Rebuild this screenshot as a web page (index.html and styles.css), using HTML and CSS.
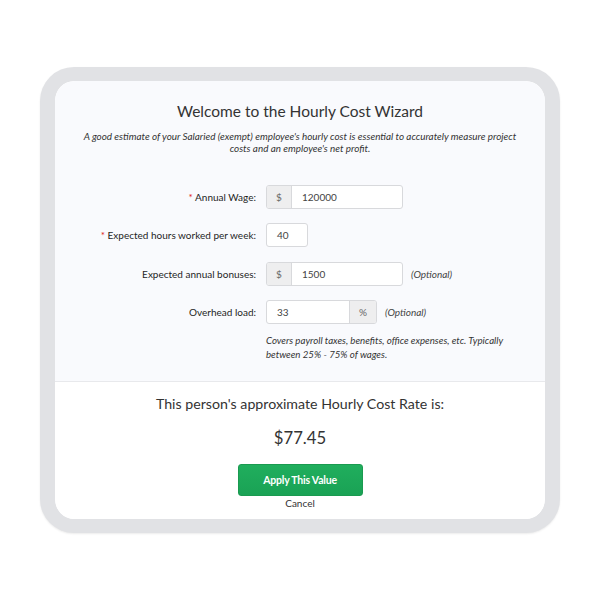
FILE: index.html
```html
<!DOCTYPE html>
<html>
<head>
<meta charset="utf-8">
<link rel="stylesheet" href="styles.css">
</head>
<body>
<div class="frame">
  <div class="card">
    <div class="top">
      <h1 class="title">Welcome to the Hourly Cost Wizard</h1>
      <p class="intro">A good estimate of your Salaried (exempt) employee's hourly cost is essential to accurately measure project costs and an employee's net profit.</p>
      <div class="form">
        <div class="label"><span class="req">*</span> Annual Wage:</div>
        <div class="field">
          <div class="group wide"><span class="addon">$</span><span class="input">120000</span></div>
        </div>
        <div class="label"><span class="req">*</span> Expected hours worked per week:</div>
        <div class="field">
          <div class="group short"><span class="input">40</span></div>
        </div>
        <div class="label">Expected annual bonuses:</div>
        <div class="field">
          <div class="group wide"><span class="addon">$</span><span class="input">1500</span></div>
          <span class="opt">(Optional)</span>
        </div>
        <div class="label">Overhead load:</div>
        <div class="field">
          <div class="group mid"><span class="input">33</span><span class="addon right">%</span></div>
          <span class="opt">(Optional)</span>
        </div>
        <div></div>
        <p class="help">Covers payroll taxes, benefits, office expenses, etc. Typically between 25% - 75% of wages.</p>
      </div>
    </div>
    <div class="bottom">
      <p class="rate-label">This person's approximate Hourly Cost Rate is:</p>
      <p class="rate">$77.45</p>
      <button class="apply">Apply This Value</button>
      <a class="cancel">Cancel</a>
    </div>
  </div>
</div>
</body>
</html>
```
FILE: styles.css
```css
html, body { margin: 0; padding: 0; background: #fff; }
body {
  font-family: Lato, "Open Sans", Arial, sans-serif;
  color: #333;
  width: 600px; height: 600px;
}
.frame {
  position: relative;
  margin: 67px 0 0 40px;
  width: 490px;
  height: 438px;
  border: 14px solid #e1e2e5;
  border-left-width: 15px;
  border-right-width: 15px;
  border-radius: 34px;
  box-shadow: 0 1px 2px rgba(0,0,0,0.08);
  overflow: hidden;
  background: #fff;
}
.card {
  height: 100%;
  display: flex;
  flex-direction: column;
  border-radius: 20px;
  overflow: hidden;
}
.top {
  background: #f9fafd;
  border-bottom: 1px solid #e8e9ec;
  padding: 19px 0 0 0;
  height: 301px;
  box-sizing: border-box;
}
.title {
  margin: 0;
  text-align: center;
  font-weight: 400;
  font-size: 15.5px;
  line-height: 22px;
  color: #333;
}
.intro {
  margin: 8px 20px 0 20px;
  text-align: center;
  font-style: italic;
  font-size: 9.9px;
  line-height: 12px;
  color: #333;
}
.form {
  margin-top: 31px;
  display: grid;
  grid-template-columns: 201px 1fr;
  column-gap: 10px;
  row-gap: 14.3px;
  align-items: center;
}
.label {
  text-align: right;
  font-size: 10px;
  color: #1e1e1e;
}
.req { color: #e02020; }
.field { display: flex; align-items: center; gap: 8px; }
.group {
  display: flex;
  height: 24px;
  box-sizing: border-box;
  border: 1px solid #d8d9dc;
  border-radius: 3px;
  background: #fff;
  overflow: hidden;
  font-size: 10px;
}
.wide { width: 137px; }
.short { width: 42px; }
.mid { width: 111px; }
.addon {
  width: 24px;
  flex: none;
  background: #eeeeef;
  border-right: 1px solid #d8d9dc;
  display: flex; align-items: center; justify-content: center;
  color: #666;
}
.addon.right { width: 26px; border-right: none; border-left: 1px solid #d8d9dc; }
.input {
  flex: 1;
  display: flex; align-items: center;
  padding-left: 10px;
  color: #444;
}
.opt {
  font-style: italic;
  font-size: 10px;
  color: #444;
}
.help {
  margin: -5px 28px 0 0;
  font-style: italic;
  font-size: 9.7px;
  line-height: 14px;
  color: #333;
}
.bottom {
  flex: 1;
  background: #fff;
  display: flex;
  flex-direction: column;
  align-items: center;
}
.rate-label {
  margin: 12px 0 0;
  font-size: 14.2px;
  line-height: 20px;
  color: #333;
}
.rate {
  margin: 13px 0 0;
  font-size: 16.7px;
  line-height: 22px;
  color: #333;
}
.apply {
  margin-top: 15px;
  width: 125px;
  height: 32px;
  border: 1px solid #1a9a50;
  border-radius: 3px;
  background: linear-gradient(#20ae5d, #1aa255);
  color: #fff;
  font-family: Lato, sans-serif;
  font-weight: 700;
  font-size: 10.5px;
  letter-spacing: -0.2px;
}
.cancel {
  margin-top: 1px;
  font-size: 10px;
  color: #333;
}
```
